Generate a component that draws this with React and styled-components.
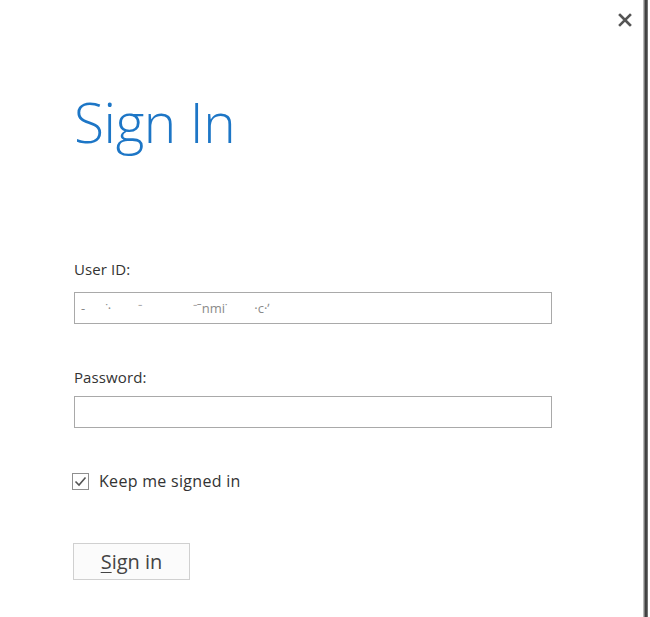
import React from 'react';
import styled, { createGlobalStyle } from 'styled-components';

const GlobalStyle = createGlobalStyle`
    body {
        margin: 0;
        background: #fff;
        font-family: "Open Sans", "Liberation Sans", sans-serif;
    }
`;

const App = () => {
    return (
        <>
            <GlobalStyle />
            <StyledWindow>
                <StyledPanel>
                    <StyledClose aria-label="Close">
                        <svg width="14" height="14" viewBox="0 0 14 14">
                            <path d="M2 2 L12 12 M12 2 L2 12" stroke="#555" strokeWidth="2.6" strokeLinecap="square" />
                        </svg>
                    </StyledClose>
                    <StyledTitle>Sign In</StyledTitle>
                    <StyledField top={99} gap={13}>
                        <label>User ID:</label>
                        <StyledInput defaultValue="-      ˙·        ⁻               ⁻ˉnmi˙        ·c·ʼ" blurred />
                    </StyledField>
                    <StyledField top={43} gap={9}>
                        <label>Password:</label>
                        <StyledInput type="password" />
                    </StyledField>
                    <StyledCheckRow>
                        <StyledBox>
                            <svg width="13" height="11" viewBox="0 0 13 11">
                                <path d="M1.5 5.5 L5 9 L11.5 1.5" fill="none" stroke="#555" strokeWidth="1.6" />
                            </svg>
                        </StyledBox>
                        <span>Keep me signed in</span>
                    </StyledCheckRow>
                    <StyledButton><u>S</u>ign in</StyledButton>
                </StyledPanel>
                <StyledEdge />
            </StyledWindow>
        </>
    );
};

const StyledWindow = styled.div`
    display: flex;
    width: 650px;
    height: 617px;
    overflow: hidden;
`;

const StyledPanel = styled.div`
    position: relative;
    width: 643px;
    padding: 84px 0 0 74px;
    box-sizing: border-box;
    display: flex;
    flex-direction: column;
`;

const StyledEdge = styled.div`
    width: 5px;
    height: 100%;
    background: linear-gradient(to right, #b8b8b8 0, #b8b8b8 1px, #3c3c3c 2px, #4a4a4a 4px, #9a9a9a 5px);
`;

const StyledClose = styled.div`
    position: absolute;
    top: 13px;
    right: 11px;
    width: 14px;
    height: 14px;
    display: flex;
`;

const StyledTitle = styled.h1`
    margin: 0;
    font-family: "Open Sans", "Liberation Sans", sans-serif;
    font-weight: 300;
    font-size: 55px;
    line-height: 76px;
    color: #1d76c6;
    letter-spacing: -0.4px;
`;

const StyledField = styled.div`
    display: flex;
    flex-direction: column;
    margin-top: ${props => props.top}px;

    label {
        font-size: 15px;
        line-height: 20px;
        color: #333;
        margin-bottom: ${props => props.gap}px;
        letter-spacing: 0.1px;
    }
`;

const StyledInput = styled.input`
    width: 478px;
    height: 32px;
    box-sizing: border-box;
    border: 1px solid #a9a9a9;
    background: #fff;
    padding: 0 6px;
    font-family: "Open Sans", "Liberation Sans", sans-serif;
    font-size: 13px;
    color: ${props => props.blurred ? '#8a8a8a' : '#333'};
    outline: none;
`;

const StyledCheckRow = styled.label`
    display: flex;
    align-items: center;
    gap: 10px;
    margin-top: 42px;
    margin-left: -2px;
    font-size: 16px;
    line-height: 22px;
    letter-spacing: 0.3px;
    color: #333;
`;

const StyledBox = styled.span`
    width: 17px;
    height: 17px;
    box-sizing: border-box;
    border: 1px solid #8f8f8f;
    display: flex;
    align-items: center;
    justify-content: center;
`;

const StyledButton = styled.button`
    align-self: flex-start;
    margin-top: 51px;
    margin-left: -1px;
    width: 117px;
    height: 37px;
    border: 1px solid #d0d0d0;
    background: #fbfbfb;
    font-family: "Open Sans", "Liberation Sans", sans-serif;
    font-size: 20px;
    color: #444;
    padding: 0;
    u { text-decoration-thickness: 1px; text-underline-offset: 3px; }
`;

export default App;
